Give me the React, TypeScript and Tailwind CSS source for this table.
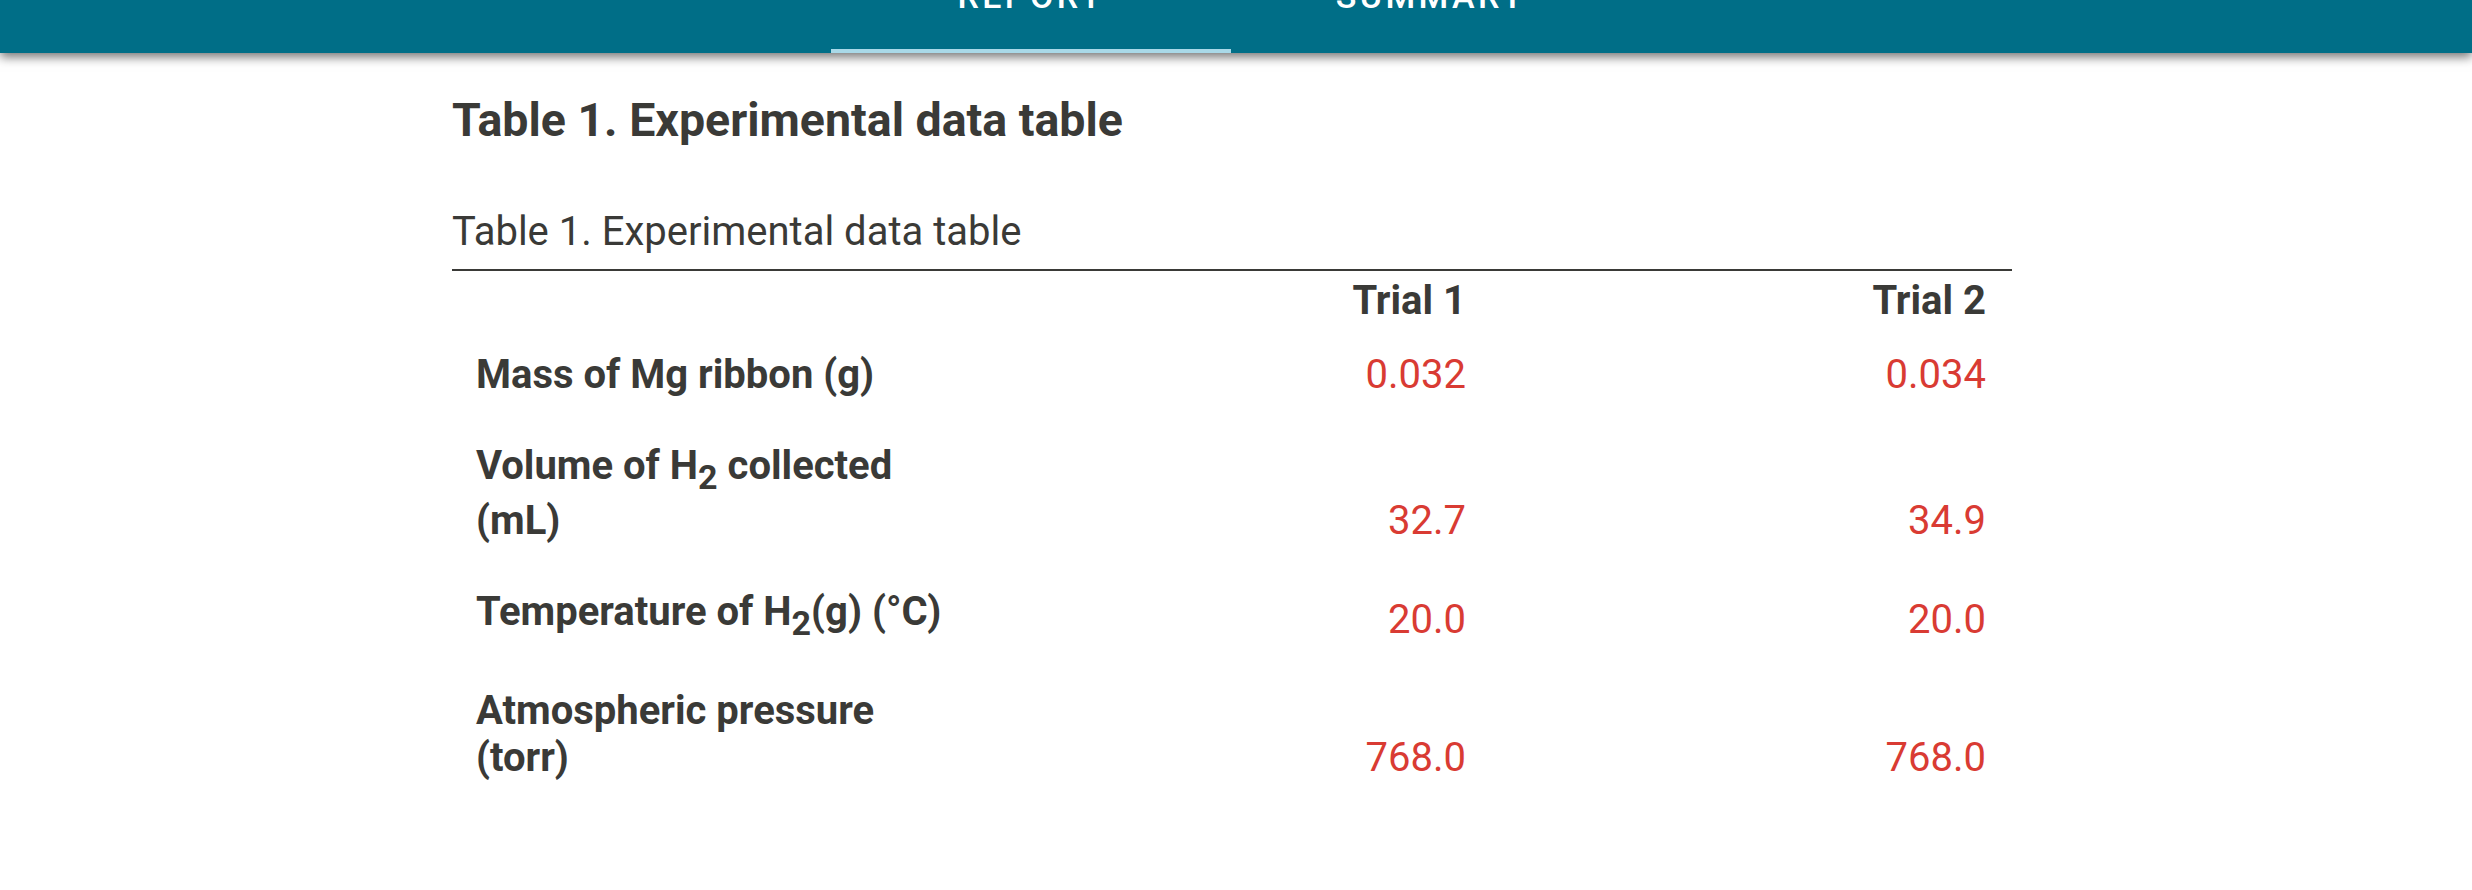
import React from 'react'

const font = { fontFamily: 'Roboto, "Noto Sans", sans-serif' }

type Row = { label: React.ReactNode; t1: string; t2: string }

const Sub = ({ children }: { children: React.ReactNode }) => (
  <sub className="static align-[-0.3em] text-[0.85em] leading-[normal]">{children}</sub>
)

const rows: Row[] = [
  { label: 'Mass of Mg ribbon (g)', t1: '0.032', t2: '0.034' },
  {
    label: (
      <>
        Volume of H<Sub>2</Sub> collected (mL)
      </>
    ),
    t1: '32.7',
    t2: '34.9',
  },
  {
    label: (
      <>
        Temperature of H<Sub>2</Sub>(g) (°C)
      </>
    ),
    t1: '20.0',
    t2: '20.0',
  },
  { label: 'Atmospheric pressure (torr)', t1: '768.0', t2: '768.0' },
]

function TabBar() {
  return (
    <header className="relative z-10 h-[53px] bg-[#006e87] shadow-[0_4px_10px_rgba(0,0,0,0.55)]">
      <nav className="flex h-full pl-[831px]">
        {['REPORT', 'SUMMARY'].map((tab, i) => (
          <div key={tab} className="flex h-full w-[400px] flex-col items-center justify-between">
            <span className="-mt-[21px] text-[34px] font-medium leading-none tracking-[0.1em] text-white">{tab}</span>
            <span className={i === 0 ? 'h-[4px] w-full bg-[#a9d9e8]' : 'h-[4px] w-full'} />
          </div>
        ))}
      </nav>
    </header>
  )
}

export default function App() {
  return (
    <div className="min-h-[890px] bg-white text-[#3a3a37]" style={font}>
      <TabBar />
      <main className="ml-[452px] w-[1560px] pt-[40px]">
        <h2 className="text-[46.5px] font-bold leading-[normal]">Table 1. Experimental data table</h2>
        <table className="mt-[61px] w-full table-fixed border-collapse">
          <caption className="pb-[14px] text-left text-[40px] leading-[normal]">Table 1. Experimental data table</caption>
          <thead>
            <tr className="border-t-2 border-[#3a3a37]">
              <th className="w-1/3" />
              <th className="px-[26px] pt-[6px] pb-[5px] text-right align-bottom text-[40px] font-bold leading-[normal]">Trial 1</th>
              <th className="px-[26px] pt-[6px] pb-[5px] text-right align-bottom text-[40px] font-bold leading-[normal]">Trial 2</th>
            </tr>
          </thead>
          <tbody>
            {rows.map((row) => (
              <tr key={row.t1 + row.t2}>
                <td className="pl-[24px] pr-[26px] py-[22px] align-bottom text-[40px] font-bold leading-[normal]">{row.label}</td>
                <td className="px-[26px] py-[22px] text-right align-bottom text-[40px] leading-[normal] text-[#d93b33]">{row.t1}</td>
                <td className="px-[26px] py-[22px] text-right align-bottom text-[40px] leading-[normal] text-[#d93b33]">{row.t2}</td>
              </tr>
            ))}
          </tbody>
        </table>
      </main>
    </div>
  )
}
